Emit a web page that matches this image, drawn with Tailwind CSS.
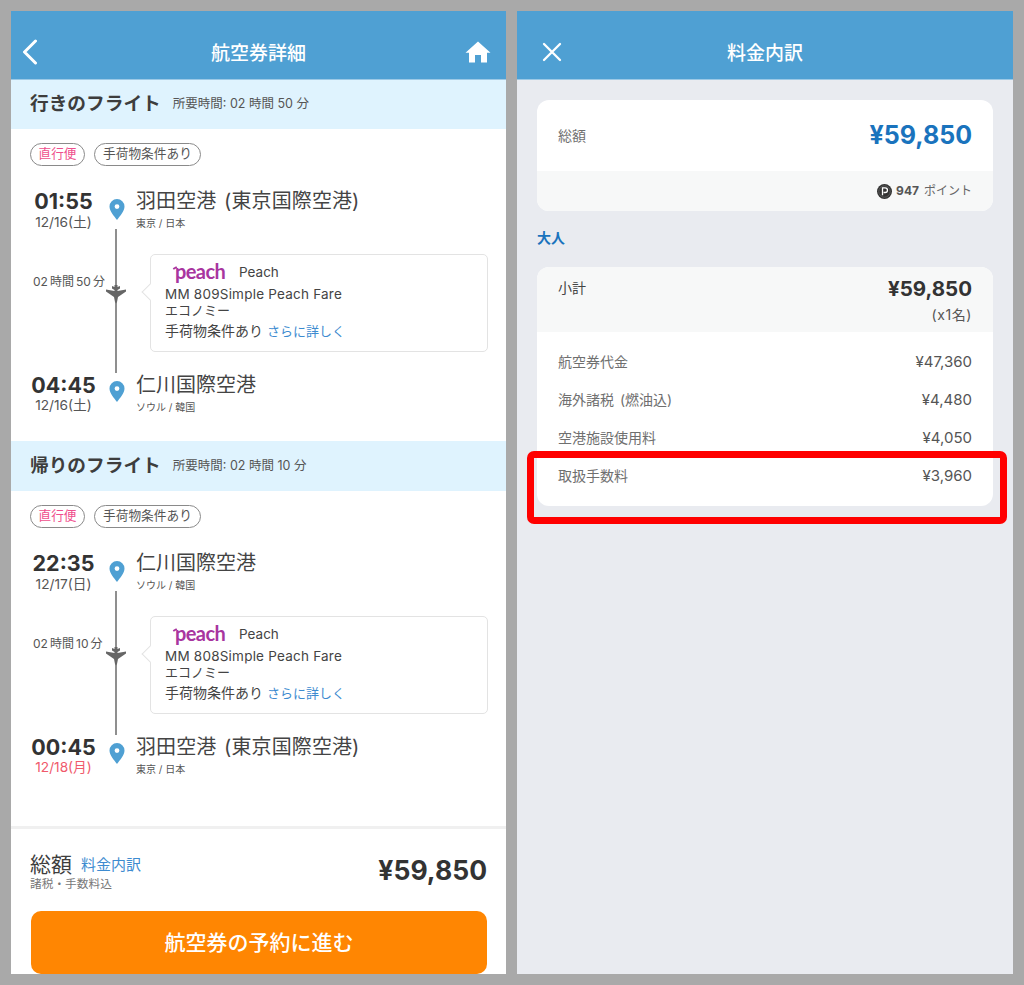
<!DOCTYPE html>
<html lang="ja">
<head>
<meta charset="utf-8">
<script src="https://cdn.jsdelivr.net/npm/@tailwindcss/browser@4"></script>
</head>
<body class="bg-[#a9a9a9] font-['Inter','Noto_Sans_CJK_JP',sans-serif] text-[#444]">
<div class="relative flex gap-[11px] w-[1024px] h-[985px] pl-[11px] pt-[11px] overflow-hidden">

  <!-- left panel -->
  <div class="w-[495px] h-[963px] bg-white flex flex-col overflow-hidden">
    <div class="h-[69px] shrink-0 bg-[#4fa0d3] border-b border-[#9cc9e6] relative flex items-center justify-center pt-[16px]">
      <svg class="absolute left-[11px] top-[28px]" width="16" height="26" viewBox="0 0 16 26" fill="none" stroke="#fff" stroke-width="3" stroke-linecap="round" stroke-linejoin="round"><path d="M13.5 2 L2.5 13 L13.5 24"/></svg>
      <span class="text-white text-[19px] font-medium leading-none">航空券詳細</span>
      <svg class="absolute left-[454px] top-[30px]" width="26" height="22" viewBox="0 0 26 22" fill="#fff"><path d="M13 .5 L25.500 11.700 L22 11.700 L22 21.500 L16 21.500 L16 14 L10 14 L10 21.500 L4 21.500 L4 11.700 L.5 11.700 Z"/></svg>
    </div>

    <!-- outbound -->
    <section class="h-[361px] shrink-0">
      <div class="h-[49px] bg-[#dff3fe] flex items-center pl-[19px] gap-[12px]">
        <span class="text-[18.700px] font-bold text-[#3d3d3d] leading-none">行きのフライト</span>
        <span class="text-[12.500px] text-[#555] leading-none">所要時間: 02 時間 50 分</span>
      </div>
      <div class="flex gap-[9px] pl-[19px] pt-[14px] h-[58px]">
        <span class="h-[23px] px-[7.500px] rounded-full border border-[#8a8a8a] text-[12.700px] text-[#ef4f8d] leading-[20px]">直行便</span>
        <span class="h-[23px] px-[8px] rounded-full border border-[#8a8a8a] text-[12.700px] text-[#555] leading-[20px]">手荷物条件あり</span>
      </div>
      <div class="flex h-[42px] pl-[19px]">
        <div class="w-[67px] text-center">
          <div class="text-[21.500px] font-bold text-[#333] leading-[26px] pt-px">01:55</div>
          <div class="text-[13.700px] text-[#555] leading-[17px]">12/16(土)</div>
        </div>
        <div class="w-[39px] flex justify-center pt-[12px] pl-[1px]">
          <svg width="16" height="21" viewBox="0 0 16 21"><path fill="#4fa0d3" fill-rule="evenodd" d="M8 0a7.500 7.500 0 0 1 7.500 7.500C15.500 12 11 17 8 21 5 17 .5 12 .5 7.500A7.500 7.500 0 0 1 8 0Zm0 5.200a2.400 2.400 0 1 0 0 4.800 2.400 2.400 0 0 0 0-4.800Z"/></svg>
        </div>
        <div>
          <div class="text-[20px] text-[#444] leading-[26px] pt-px [word-spacing:2px] tracking-[.1px]">羽田空港 (東京国際空港)</div>
          <div class="text-[10px] text-[#555] leading-[19px]">東京 / 日本</div>
        </div>
      </div>
      <div class="flex h-[144px]">
        <div class="w-[94px] pl-[22px] pt-[45px] text-[12px] text-[#555] leading-[16px] whitespace-nowrap [word-spacing:-1.300px]">02 時間 50 分</div>
        <div class="relative w-[45px] flex justify-start pl-[10px]">
          <div class="w-[2px] h-full bg-[#8f8f8f]"></div>
          <svg class="absolute left-[1px] top-[55px]" width="20" height="20" viewBox="0 0 20 20" fill="#666"><path d="M8.500 1H11.500V3L14 2V4.500L11.500 6V7L20 5.500V7.500L12 13L11 18L10 19.500L9 18L8 13L0 7.500V5.500L8.500 7V6L6 4.500V2L8.500 3Z"/></svg>
        </div>
        <div class="relative mt-[25px] w-[338px] h-[98px] border-[1.500px] border-[#e3e3e3] rounded-[5px] pl-[14px] pt-[8px] text-[13px] text-[#444] leading-[16px]">
          <div class="absolute left-[-7px] top-[31px] w-[12px] h-[12px] rotate-45 bg-white border-l-[1.500px] border-b-[1.500px] border-[#e3e3e3]"></div>
          <div class="flex items-center h-[18px] relative">
            <span class="relative w-[74px] pl-[10px] font-['Lato',sans-serif] font-bold text-[20px] text-[#a8359f] tracking-[-.6px] leading-none -mt-[3px]"><i class="absolute left-[8px] top-[6px] w-[4px] h-[2px] bg-[#a8359f] -rotate-30"></i>peach</span>
            <span class="text-[13.500px]">Peach</span>
          </div>
          <div class="mt-[5px] relative text-[13.500px] tracking-[.22px]">MM 809Simple Peach Fare</div>
          <div class="relative">エコノミー</div>
          <div class="mt-[5px] relative text-[14px]">手荷物条件あり <a class="text-[13px] text-[#3d8bd0]">さらに詳しく</a></div>
        </div>
      </div>
      <div class="flex h-[42px] pl-[19px]">
        <div class="w-[67px] text-center">
          <div class="text-[21.500px] font-bold text-[#333] leading-[24px]">04:45</div>
          <div class="text-[13.700px] text-[#555] leading-[17px]">12/16(土)</div>
        </div>
        <div class="w-[39px] flex justify-center pt-[8px] pl-[1px]">
          <svg width="16" height="21" viewBox="0 0 16 21"><path fill="#4fa0d3" fill-rule="evenodd" d="M8 0a7.500 7.500 0 0 1 7.500 7.500C15.500 12 11 17 8 21 5 17 .5 12 .5 7.500A7.500 7.500 0 0 1 8 0Zm0 5.200a2.400 2.400 0 1 0 0 4.800 2.400 2.400 0 0 0 0-4.800Z"/></svg>
        </div>
        <div>
          <div class="text-[20px] text-[#444] leading-[24px]">仁川国際空港</div>
          <div class="text-[10px] text-[#555] leading-[20px]">ソウル / 韓国</div>
        </div>
      </div>
    </section>

    <!-- return -->
    <section class="h-[361px] shrink-0">
      <div class="h-[50px] bg-[#dff3fe] flex items-center pl-[19px] gap-[12px]">
        <span class="text-[18.700px] font-bold text-[#3d3d3d] leading-none">帰りのフライト</span>
        <span class="text-[12.500px] text-[#555] leading-none">所要時間: 02 時間 10 分</span>
      </div>
      <div class="flex gap-[9px] pl-[19px] pt-[14px] h-[58px]">
        <span class="h-[23px] px-[7.500px] rounded-full border border-[#8a8a8a] text-[12.700px] text-[#ef4f8d] leading-[20px]">直行便</span>
        <span class="h-[23px] px-[8px] rounded-full border border-[#8a8a8a] text-[12.700px] text-[#555] leading-[20px]">手荷物条件あり</span>
      </div>
      <div class="flex h-[42px] pl-[19px]">
        <div class="w-[67px] text-center">
          <div class="text-[21.500px] font-bold text-[#333] leading-[26px] pt-px">22:35</div>
          <div class="text-[13.700px] text-[#555] leading-[17px]">12/17(日)</div>
        </div>
        <div class="w-[39px] flex justify-center pt-[12px] pl-[1px]">
          <svg width="16" height="21" viewBox="0 0 16 21"><path fill="#4fa0d3" fill-rule="evenodd" d="M8 0a7.500 7.500 0 0 1 7.500 7.500C15.500 12 11 17 8 21 5 17 .5 12 .5 7.500A7.500 7.500 0 0 1 8 0Zm0 5.200a2.400 2.400 0 1 0 0 4.800 2.400 2.400 0 0 0 0-4.800Z"/></svg>
        </div>
        <div>
          <div class="text-[20px] text-[#444] leading-[26px] pt-px">仁川国際空港</div>
          <div class="text-[10px] text-[#555] leading-[19px]">ソウル / 韓国</div>
        </div>
      </div>
      <div class="flex h-[144px]">
        <div class="w-[94px] pl-[22px] pt-[45px] text-[12px] text-[#555] leading-[16px] whitespace-nowrap [word-spacing:-1.300px]">02 時間 10 分</div>
        <div class="relative w-[45px] flex justify-start pl-[10px]">
          <div class="w-[2px] h-full bg-[#8f8f8f]"></div>
          <svg class="absolute left-[1px] top-[55px]" width="20" height="20" viewBox="0 0 20 20" fill="#666"><path d="M8.500 1H11.500V3L14 2V4.500L11.500 6V7L20 5.500V7.500L12 13L11 18L10 19.500L9 18L8 13L0 7.500V5.500L8.500 7V6L6 4.500V2L8.500 3Z"/></svg>
        </div>
        <div class="relative mt-[25px] w-[338px] h-[98px] border-[1.500px] border-[#e3e3e3] rounded-[5px] pl-[14px] pt-[8px] text-[13px] text-[#444] leading-[16px]">
          <div class="absolute left-[-7px] top-[31px] w-[12px] h-[12px] rotate-45 bg-white border-l-[1.500px] border-b-[1.500px] border-[#e3e3e3]"></div>
          <div class="flex items-center h-[18px] relative">
            <span class="relative w-[74px] pl-[10px] font-['Lato',sans-serif] font-bold text-[20px] text-[#a8359f] tracking-[-.6px] leading-none -mt-[3px]"><i class="absolute left-[8px] top-[6px] w-[4px] h-[2px] bg-[#a8359f] -rotate-30"></i>peach</span>
            <span class="text-[13.500px]">Peach</span>
          </div>
          <div class="mt-[5px] relative text-[13.500px] tracking-[.22px]">MM 808Simple Peach Fare</div>
          <div class="relative">エコノミー</div>
          <div class="mt-[5px] relative text-[14px]">手荷物条件あり <a class="text-[13px] text-[#3d8bd0]">さらに詳しく</a></div>
        </div>
      </div>
      <div class="flex h-[42px] pl-[19px]">
        <div class="w-[67px] text-center">
          <div class="text-[21.500px] font-bold text-[#333] leading-[24px]">00:45</div>
          <div class="text-[13.700px] text-[#f0596b] leading-[17px]">12/18(月)</div>
        </div>
        <div class="w-[39px] flex justify-center pt-[8px] pl-[1px]">
          <svg width="16" height="21" viewBox="0 0 16 21"><path fill="#4fa0d3" fill-rule="evenodd" d="M8 0a7.500 7.500 0 0 1 7.500 7.500C15.500 12 11 17 8 21 5 17 .5 12 .5 7.500A7.500 7.500 0 0 1 8 0Zm0 5.200a2.400 2.400 0 1 0 0 4.800 2.400 2.400 0 0 0 0-4.800Z"/></svg>
        </div>
        <div>
          <div class="text-[20px] text-[#444] leading-[24px] [word-spacing:2px] tracking-[.1px]">羽田空港 (東京国際空港)</div>
          <div class="text-[10px] text-[#555] leading-[20px]">東京 / 日本</div>
        </div>
      </div>
    </section>

    <!-- footer -->
    <div class="flex-1 mt-[24px] border-t-[3px] border-[#f0f0f0] pl-[19px] pr-[19px] pt-[24px] flex flex-col">
      <div class="flex justify-between items-center h-[38px]">
        <div>
          <div class="flex items-center gap-[9px] leading-[24px]">
            <span class="text-[21px] text-[#3d3d3d]">総額</span>
            <span class="text-[15px] text-[#3d8bd0]">料金内訳</span>
          </div>
          <div class="text-[11.700px] text-[#777] leading-[14px]">諸税・手数料込</div>
        </div>
        <div class="text-[26.500px] font-bold text-[#333] leading-none -mt-[3px]">¥59,850</div>
      </div>
      <div class="mt-[20px] ml-px w-[456px] h-[63px] bg-[#ff8602] rounded-[10px] flex items-center justify-center text-white text-[21px] font-medium">航空券の予約に進む</div>
    </div>
  </div>

  <!-- right panel -->
  <div class="w-[496px] h-[963px] bg-[#e9ebf0] flex flex-col">
    <div class="h-[69px] shrink-0 bg-[#4fa0d3] border-b border-[#9cc9e6] relative flex items-center justify-center pt-[16px]">
      <svg class="absolute left-[25px] top-[31px]" width="20" height="20" viewBox="0 0 20 20" fill="none" stroke="#fff" stroke-width="2.300" stroke-linecap="round"><path d="M2 2 L18 18 M18 2 L2 18"/></svg>
      <span class="text-white text-[19px] font-medium leading-none">料金内訳</span>
    </div>
    <div class="px-[20px] pt-[20px]">
      <div class="bg-white rounded-[12px] overflow-hidden">
        <div class="h-[71px] flex items-center justify-between px-[21px]">
          <span class="text-[14px] text-[#6f6f6f] -mt-px">総額</span>
          <span class="text-[25px] font-bold text-[#1a73bd] leading-none">¥59,850</span>
        </div>
        <div class="h-[40px] bg-[#f7f8f8] flex items-center justify-end pr-[21px] text-[12px] text-[#555]">
          <svg class="mr-[4px]" width="15" height="15" viewBox="0 0 15 15"><circle cx="7.500" cy="7.500" r="7.500" fill="#333"/><circle cx="7.500" cy="7.500" r="5.700" fill="none" stroke="#777" stroke-width=".6"/><path d="M5.500 11.300V3.800h2.600a2.300 2.300 0 0 1 0 4.700H6.600" fill="none" stroke="#fff" stroke-width="1.300"/></svg>
          <span class="font-bold text-[#555]">947</span>
          <span class="ml-[5px] text-[12px] text-[#666]">ポイント</span>
        </div>
      </div>
      <div class="mt-[17px] mb-[20px] text-[14px] font-bold text-[#1a73bd] leading-[19px]">大人</div>
      <div class="bg-white rounded-[12px] overflow-hidden h-[239px]">
        <div class="h-[65px] bg-[#f7f8f8] px-[21px] pt-[10px] flex justify-between">
          <span class="text-[14px] text-[#444] leading-[22px]">小計</span>
          <div class="text-right">
            <div class="text-[20.500px] font-bold text-[#333] leading-[24px]">¥59,850</div>
            <div class="text-[14px] text-[#555] leading-[28px] tracking-[.6px]">(x1名)</div>
          </div>
        </div>
        <div class="px-[21px] pt-[20px] text-[14px] text-[#6f6f6f] flex flex-col gap-[18.100px]">
          <div class="flex justify-between leading-[20px]"><span>航空券代金</span><span class="text-[15px] text-[#555]">¥47,360</span></div>
          <div class="flex justify-between leading-[20px]"><span class="[word-spacing:2px]">海外諸税 (燃油込)</span><span class="text-[15px] text-[#555]">¥4,480</span></div>
          <div class="flex justify-between leading-[20px]"><span>空港施設使用料</span><span class="text-[15px] text-[#555]">¥4,050</span></div>
          <div class="flex justify-between leading-[20px]"><span>取扱手数料</span><span class="text-[15px] text-[#555]">¥3,960</span></div>
        </div>
      </div>
    </div>
  </div>

  <!-- annotation -->
  <div class="absolute left-[527px] top-[451px] w-[480px] h-[73px] border-[7px] border-[#ff0000] rounded-[7px]"></div>
</div>
</body>
</html>
